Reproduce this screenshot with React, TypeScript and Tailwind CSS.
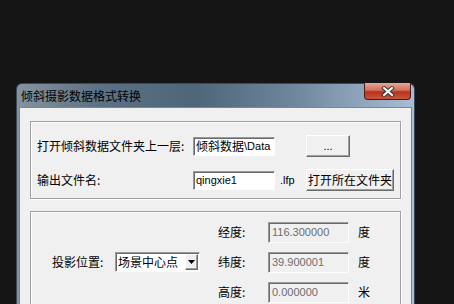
import React from "react"

const cjk = "font-['Noto_Sans_CJK_SC',sans-serif]"
const latin = "font-['Liberation_Sans','Noto_Sans_CJK_SC',sans-serif]"

const sunken =
  "border border-t-[#9a9a9a] border-l-[#9a9a9a] border-b-[#fdfdfd] border-r-[#fdfdfd] shadow-[inset_1px_1px_0_#6a6a6a]"
const raised =
  "border border-t-white border-l-white border-b-[#6a6a6a] border-r-[#6a6a6a] shadow-[inset_-1px_-1px_0_#a0a0a0] bg-[#f0f0f0]"

function CoordRow({ label, value, unit }: { label: string; value: string; unit: string }) {
  return (
    <div className="flex h-[30px] items-center">
      <span className={`${cjk} w-[50px] text-[12px] text-black`}>{label}</span>
      <div className={`${sunken} flex h-[21px] w-[81px] items-center bg-[#f0f0f0] pl-[3px]`}>
        <span className={`${latin} text-[11px] text-[#6d6d6d]`}>{value}</span>
      </div>
      <span className={`${cjk} ml-[9px] text-[12px] text-black`}>{unit}</span>
    </div>
  )
}

export default function App() {
  return (
    <div className="h-[304px] w-[454px] overflow-hidden bg-[#151515] pl-[16px] pt-[83px]">
      <div className="flex h-[240px] w-[399px] flex-col rounded-t-[6px] border border-b-0 border-[#3c4a5a] bg-[linear-gradient(90deg,#8593a0_0%,#5d7284_20%,#4d6678_45%,#6f879d_70%,#a8bdd5_100%)] px-[2px]">
        <div className="flex h-[23px] shrink-0 items-start">
          <span className={`${cjk} ml-[2px] mt-[3px] text-[12px] leading-[18px] text-black`}>
            倾斜摄影数据格式转换
          </span>
          <div className="ml-auto -mt-px mr-[1px] flex h-[17px] w-[47px] items-center justify-center rounded-b-[4px] border border-t-0 border-[#4a1c14] bg-[linear-gradient(180deg,#e3a897_0%,#d26f5a_45%,#b8321c_55%,#c9553c_100%)]">
            <svg width="14" height="11" viewBox="0 0 14 11">
              <path d="M3 2 L11 9 M11 2 L3 9" stroke="#3a3a3a" strokeWidth="4" strokeLinecap="square" />
              <path d="M3 2 L11 9 M11 2 L3 9" stroke="#ffffff" strokeWidth="2" strokeLinecap="square" />
            </svg>
          </div>
        </div>
        <div className="flex-1 border border-b-0 border-[#7088a3] bg-[#f0f0f0] pl-[10px] pt-[13px]">
          <div className="h-[78px] w-[371px] border border-[#a0a0a0] pl-[6px] pt-[13px] shadow-[inset_1px_1px_0_#fff,1px_1px_0_#fff]">
            <div className="flex h-[22px] items-center">
              <span className={`${cjk} w-[156px] text-[12px] text-black`}>打开倾斜数据文件夹上一层:</span>
              <div className={`${sunken} flex h-[19px] w-[82px] items-center overflow-hidden bg-white pl-[2px]`}>
                <span className={`${cjk} text-[12px] text-black`}>倾斜数据</span>
                <span className={`${latin} text-[11px] text-black`}>\Data</span>
              </div>
              <button className={`${raised} ml-[31px] h-[22px] w-[44px] ${latin} text-[11px] leading-none text-black`}>
                ...
              </button>
            </div>
            <div className="mt-[12px] flex h-[22px] items-center">
              <span className={`${cjk} w-[156px] text-[12px] text-black`}>输出文件名:</span>
              <div className={`${sunken} flex h-[19px] w-[82px] items-center bg-white pl-[2px]`}>
                <span className={`${latin} text-[11px] text-black`}>qingxie1</span>
              </div>
              <span className={`${latin} ml-[5px] w-[26px] text-[11px] text-black`}>.lfp</span>
              <button className={`${raised} h-[22px] w-[88px] ${cjk} text-[12px] leading-none text-black`}>
                打开所在文件夹
              </button>
            </div>
          </div>
          <div className="mt-[12px] flex h-[100px] w-[371px] items-start border border-[#a0a0a0] pt-[5px] shadow-[inset_1px_1px_0_#fff,1px_1px_0_#fff]">
            <div className="flex h-[90px] items-center pl-[21px]">
              <span className={`${cjk} w-[63px] text-[12px] text-black`}>投影位置:</span>
              <div className={`${sunken} flex h-[20px] w-[85px] items-center bg-white pl-[2px]`}>
                <span className={`${cjk} text-[12px] text-black`}>场景中心点</span>
                <div className={`${raised} ml-auto mr-px flex h-[16px] w-[13px] items-center justify-center`}>
                  <svg width="7" height="4" viewBox="0 0 7 4">
                    <path d="M0 0 H7 L3.5 4 Z" fill="#000" />
                  </svg>
                </div>
              </div>
            </div>
            <div className="ml-[18px] flex flex-col">
              <CoordRow label="经度:" value="116.300000" unit="度" />
              <CoordRow label="纬度:" value="39.900001" unit="度" />
              <CoordRow label="高度:" value="0.000000" unit="米" />
            </div>
          </div>
        </div>
      </div>
    </div>
  )
}
